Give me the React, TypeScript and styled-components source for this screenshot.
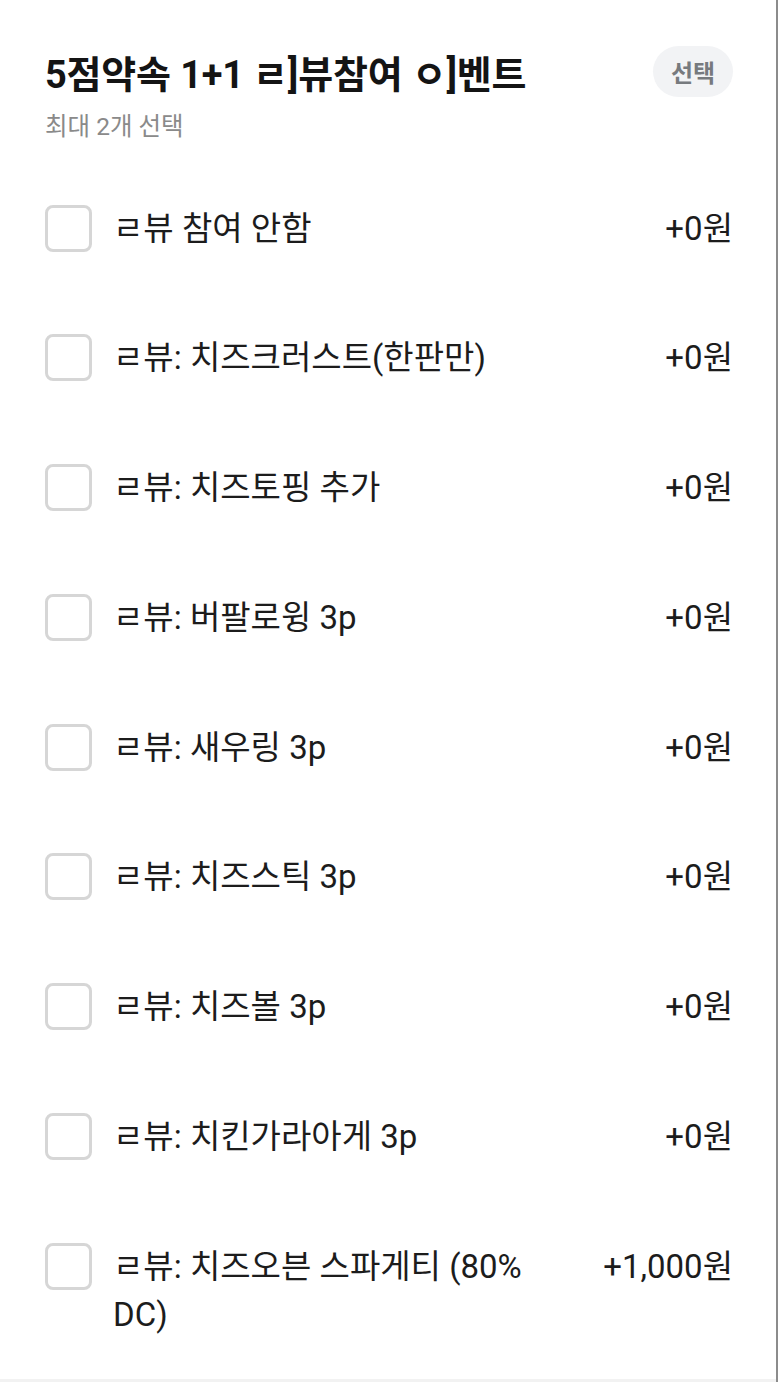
import { createGlobalStyle, styled } from "styled-components";

const GlobalStyle = createGlobalStyle`
  * { box-sizing: border-box; }
  body {
    margin: 0;
    font-family: Roboto, "Noto Sans CJK KR", sans-serif;
    background: #ffffff;
  }
`;

const options = [
  { label: "ㄹ뷰 참여 안함", price: "+0원" },
  { label: "ㄹ뷰: 치즈크러스트(한판만)", price: "+0원" },
  { label: "ㄹ뷰: 치즈토핑 추가", price: "+0원" },
  { label: "ㄹ뷰: 버팔로윙 3p", price: "+0원" },
  { label: "ㄹ뷰: 새우링 3p", price: "+0원" },
  { label: "ㄹ뷰: 치즈스틱 3p", price: "+0원" },
  { label: "ㄹ뷰: 치즈볼 3p", price: "+0원" },
  { label: "ㄹ뷰: 치킨가라아게 3p", price: "+0원" },
  { label: "ㄹ뷰: 치즈오븐 스파게티 (80% DC)", price: "+1,000원" },
];

const App = () => {
  return (
    <Page>
      <GlobalStyle />
      <Sheet>
        <Header>
          <Title>5점약속 1+1 ㄹ]뷰참여 ㅇ]벤트</Title>
          <SelectBadge>선택</SelectBadge>
        </Header>
        <Subtitle>최대 2개 선택</Subtitle>

        <OptionList>
          {options.map((opt) => (
            <OptionRow key={opt.label}>
              <CheckBox type="button" aria-label={opt.label} />
              <Label>{opt.label}</Label>
              <Price>{opt.price}</Price>
            </OptionRow>
          ))}
        </OptionList>
      </Sheet>
    </Page>
  );
};

export default App;

const Page = styled.div`
  width: 778px;
  min-height: 1382px;
  background: #f2f2f2;
  border-right: 2px solid #8c8c8c;
`;

const Sheet = styled.div`
  height: 1379px;
  background: #ffffff;
  padding: 46px 43px 0 45px;
`;

const Header = styled.div`
  display: flex;
  align-items: center;
  justify-content: space-between;
  height: 51px;
`;

const Title = styled.h1`
  margin: 0;
  font-size: 38px;
  font-weight: 700;
  color: #141414;
  letter-spacing: -0.2px;
`;

const SelectBadge = styled.span`
  display: flex;
  align-items: center;
  justify-content: center;
  width: 80px;
  height: 51px;
  border-radius: 26px;
  background: #f2f3f5;
  color: #777a7e;
  font-size: 24px;
  font-weight: 700;
`;

const Subtitle = styled.div`
  margin-top: 14px;
  font-size: 24.5px;
  line-height: 32px;
  color: #8a8a8a;
`;

const OptionList = styled.div`
  display: flex;
  flex-direction: column;
  gap: 81.75px;
  margin-top: 61.5px;
`;

const OptionRow = styled.div`
  display: flex;
  align-items: flex-start;
`;

const CheckBox = styled.button`
  flex: none;
  width: 47px;
  height: 47px;
  margin: 0 21px 0 0;
  padding: 0;
  border: 3px solid #d6d6d6;
  border-radius: 8px;
  background: #ffffff;
`;

const Label = styled.div`
  flex: 1;
  font-size: 33px;
  line-height: 48px;
  color: #1c1c1c;
`;

const Price = styled.div`
  flex: none;
  margin-left: 40px;
  font-size: 33px;
  line-height: 48px;
  color: #1c1c1c;
`;
